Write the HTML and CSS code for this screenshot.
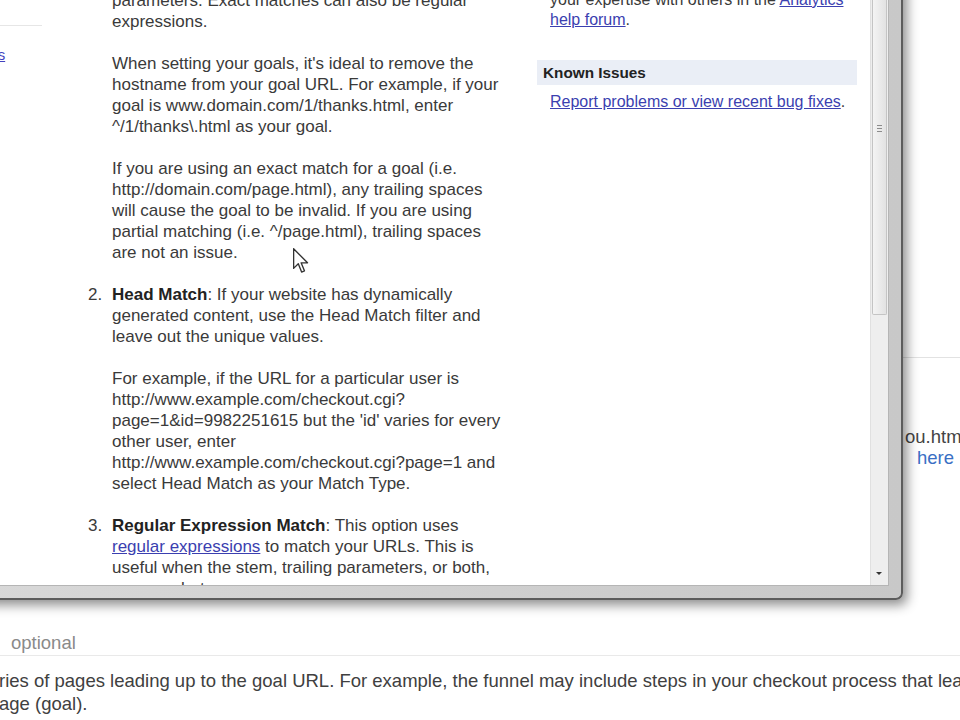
FILE: index.html
```html
<!DOCTYPE html>
<html lang="en">
<head>
<meta charset="utf-8">
<title>Goal settings help</title>
<link rel="stylesheet" href="styles.css">
</head>
<body>
<div class="bg-page">
  <div class="bg-right">
    <div class="bg-rule"></div>
    <p class="bg-url">ou.html</p>
    <p class="bg-here-line"><a class="bg-here" href="#">here</a></p>
  </div>
  <div class="bg-bottom">
    <div class="bg-label">optional</div>
    <p class="bg-text">ries of pages leading up to the goal URL. For example, the funnel may include steps in your checkout process that lead you to the thank you</p>
    <p class="bg-text">age (goal).</p>
  </div>
</div>

<div class="popup">
  <div class="client">
    <div class="content">
      <div class="nav">
        <div class="nav-rule"></div>
        <a class="nav-link" href="#">Goals</a>
      </div>
      <div class="main">
        <div class="item">
          <span class="num"></span>
          <div class="item-body">
            <p>parameters. Exact matches can also be regular expressions.</p>
            <p>When setting your goals, it's ideal to remove the hostname from your goal URL. For example, if your goal is www.domain.com/1/thanks.html, enter ^/1/thanks\.html as your goal.</p>
            <p>If you are using an exact match for a goal (i.e. http://domain.com/page.html), any trailing spaces will cause the goal to be invalid. If you are using partial matching (i.e. ^/page.html), trailing spaces are not an issue.</p>
          </div>
        </div>
        <div class="item">
          <span class="num">2.</span>
          <div class="item-body">
            <p><b>Head Match</b>: If your website has dynamically generated content, use the Head Match filter and leave out the unique values.</p>
            <p>For example, if the URL for a particular user is http://www.example.com/checkout.cgi?<br>page=1&amp;id=9982251615 but the 'id' varies for every other user, enter<br>http://www.example.com/checkout.cgi?page=1 and select Head Match as your Match Type.</p>
          </div>
        </div>
        <div class="item">
          <span class="num">3.</span>
          <div class="item-body">
            <p><b>Regular Expression Match</b>: This option uses <a href="#">regular expressions</a> to match your URLs. This is useful when the stem, trailing parameters, or both, can vary between users.</p>
          </div>
        </div>
      </div>
      <div class="side">
        <p class="side-text">your expertise with others in the <a href="#">Analytics help forum</a>.</p>
        <h3 class="side-head">Known Issues</h3>
        <p class="side-text"><a href="#">Report problems or view recent bug fixes</a>.</p>
      </div>
    </div>
    <div class="scrollbar">
      <div class="thumb"><span class="grip"></span></div>
      <div class="track"></div>
      <div class="arrow-down"></div>
    </div>
  </div>
</div>

<svg class="cursor" width="16" height="26" viewBox="0 0 13 21">
  <path d="M0.5 0.5 L0.5 16.5 L4.3 12.8 L7 19.5 L9.3 18.5 L6.6 12 L11.8 12 Z" fill="#fff" stroke="#333" stroke-width="1.1" stroke-linejoin="round"/>
</svg>
</body>
</html>
```

FILE: styles.css
```css
html, body {
  margin: 0;
  padding: 0;
}
body {
  width: 960px;
  height: 720px;
  overflow: hidden;
  position: relative;
  background: #ffffff;
  font-family: "Liberation Sans", Arial, sans-serif;
  color: #3a3a3a;
}
a {
  color: #3b3fb0;
  text-decoration: underline;
}

/* background page */
.bg-page {
  width: 960px;
}
.bg-right {
  margin-left: 903px;
  padding-top: 357px;
}
.bg-rule {
  border-top: 1px solid #e2e2e2;
}
.bg-url {
  margin: 68px 0 0 2px;
  font-size: 18.5px;
  line-height: 21px;
  white-space: nowrap;
  color: #444;
}
.bg-here-line {
  margin: 0 0 0 14px;
  font-size: 18.5px;
  line-height: 21px;
}
.bg-here {
  color: #3a6fc4;
  text-decoration: none;
}
.bg-bottom {
  margin-top: 164px;
}
.bg-label {
  padding: 0 0 1px 11px;
  font-size: 18.5px;
  line-height: 22px;
  color: #8a8a8a;
  border-bottom: 1px solid #e9e9e9;
}
.bg-text {
  margin: 0;
  font-size: 18.5px;
  line-height: 23px;
  white-space: nowrap;
  color: #404040;
  margin-left: -1px;
}
.bg-label + .bg-text {
  margin-top: 13px;
}

/* popup window */
.popup {
  position: absolute;
  left: -20px;
  top: -30px;
  width: 923px;
  height: 630px;
  box-sizing: border-box;
  padding: 0 12px 12px 0;
  background: linear-gradient(to right, #d8d8d8, #c8c8c8);
  border-right: 2px solid #5c5c5c;
  border-bottom: 2px solid #5c5c5c;
  border-bottom-right-radius: 7px;
  box-shadow: 4px 5px 12px rgba(0, 0, 0, 0.45);
}
.client {
  display: flex;
  height: 616px;
  background: #ffffff;
  border-right: 1px solid #b5b5b5;
  border-bottom: 1px solid #b5b5b5;
  box-sizing: border-box;
}
.content {
  flex: 1;
  display: flex;
  overflow: hidden;
  padding-top: 19.5px;
}
.nav {
  width: 62px;
  flex: none;
  padding-top: 35px;
  overflow: hidden;
}
.nav-rule {
  border-top: 1px solid #e6e6e6;
}
.nav-link {
  display: block;
  margin: 19px 0 0 -14px;
  font-size: 15px;
  line-height: 20px;
  white-space: nowrap;
  color: #4343c0;
}
.main {
  width: 420px;
  flex: none;
  margin-left: 46px;
  font-size: 17px;
  line-height: 21px;
}
.item {
  display: flex;
}
.num {
  width: 24px;
  flex: none;
}
.item-body {
  width: 396px;
}
.item-body p {
  margin: 0 0 21px;
}
.item-body b {
  color: #222;
}
.side {
  width: 320px;
  flex: none;
  margin-left: 29px;
  font-size: 16px;
  line-height: 20px;
}
.side-text {
  margin: 0;
  padding-left: 13px;
  white-space: nowrap;
}
.side-text:first-child {
  white-space: normal;
  width: 296px;
}
.side-head {
  margin: 30px 0 7px;
  padding-left: 6px;
  height: 25px;
  line-height: 25px;
  font-size: 15.3px;
  font-weight: bold;
  color: #222;
  background: #eaeef6;
}

/* scrollbar */
.scrollbar {
  width: 17px;
  flex: none;
  display: flex;
  flex-direction: column;
  background: #eeeeee;
  border-left: 1px solid #e0e0e0;
}
.thumb {
  height: 345px;
  margin: 0 1px;
  box-sizing: border-box;
  border: 1px solid #c4c4c4;
  border-top: none;
  border-radius: 0 0 2px 2px;
  background: linear-gradient(to right, #f4f4f4, #e2e2e2);
  position: relative;
}
.grip {
  position: absolute;
  left: 4px;
  top: 155px;
  width: 5px;
  height: 9px;
  background: repeating-linear-gradient(to bottom, #8c8c8c 0 1px, transparent 1px 3px);
}
.track {
  flex: 1;
}
.arrow-down {
  height: 17px;
  position: relative;
}
.arrow-down::after {
  content: "";
  position: absolute;
  left: 5px;
  top: 4px;
  border-left: 3px solid transparent;
  border-right: 3px solid transparent;
  border-top: 3px solid #333;
}

.cursor {
  position: absolute;
  left: 293px;
  top: 248px;
}
```
